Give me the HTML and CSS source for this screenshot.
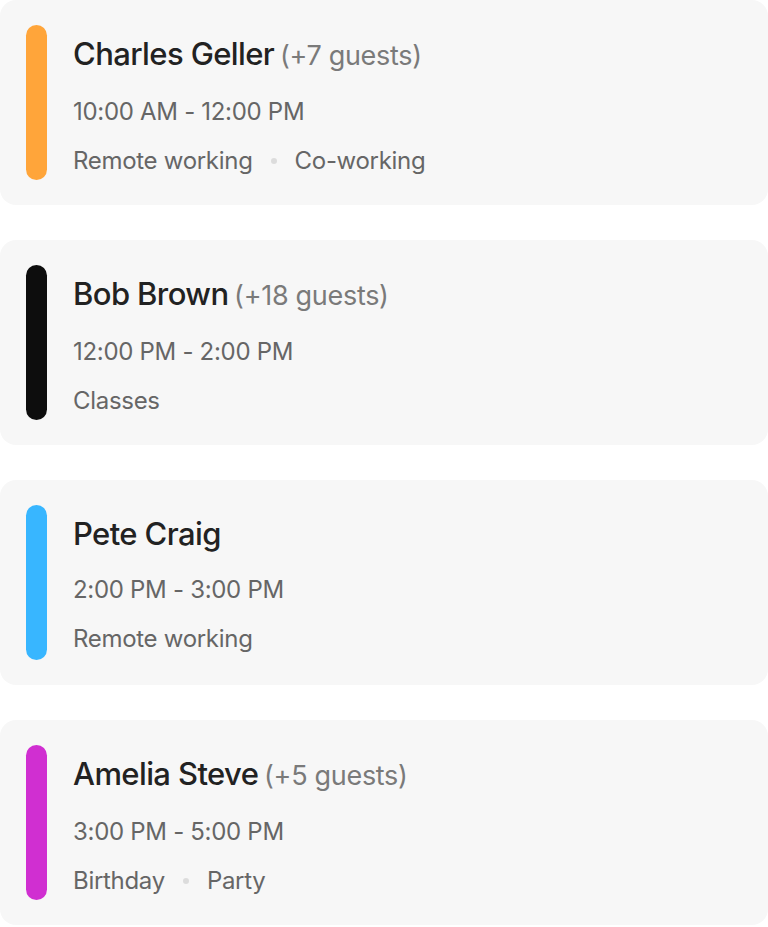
FILE: index.html
```html
<!doctype html>
<html>
<head>
    <meta charset="utf-8">
    <title>Bookings</title>
    <link rel="stylesheet" href="styles.css">
</head>
<body>
    <div class="bookings">
        <div class="booking">
            <div class="bar bar-orange"></div>
            <div class="info">
                <div class="name">Charles Geller <span class="guests">(+7 guests)</span></div>
                <div class="time">10:00 AM - 12:00 PM</div>
                <div class="tags"><span>Remote working</span><span class="dot"></span><span>Co-working</span></div>
            </div>
        </div>

        <div class="booking">
            <div class="bar bar-black"></div>
            <div class="info">
                <div class="name">Bob Brown <span class="guests">(+18 guests)</span></div>
                <div class="time">12:00 PM - 2:00 PM</div>
                <div class="tags"><span>Classes</span></div>
            </div>
        </div>

        <div class="booking">
            <div class="bar bar-blue"></div>
            <div class="info">
                <div class="name">Pete Craig</div>
                <div class="time">2:00 PM - 3:00 PM</div>
                <div class="tags"><span>Remote working</span></div>
            </div>
        </div>

        <div class="booking">
            <div class="bar bar-pink"></div>
            <div class="info">
                <div class="name">Amelia Steve <span class="guests">(+5 guests)</span></div>
                <div class="time">3:00 PM - 5:00 PM</div>
                <div class="tags"><span>Birthday</span><span class="dot"></span><span>Party</span></div>
            </div>
        </div>
    </div>
</body>
</html>
```

FILE: styles.css
```css
body {
    margin: 0;
    background: #ffffff;
    font-family: Inter, "Liberation Sans", sans-serif;
}

.bookings {
    display: flex;
    flex-direction: column;
    gap: 35px;
}

.booking {
    display: flex;
    gap: 26px;
    height: 205px;
    box-sizing: border-box;
    padding: 25px 26px;
    background: #f7f7f7;
    border-radius: 16px;
}

.bar {
    width: 21px;
    flex-shrink: 0;
    border-radius: 11px;
}

.bar-orange {
    background: #ffa53a;
}

.bar-black {
    background: #0d0d0d;
}

.bar-blue {
    background: #38b6ff;
}

.bar-pink {
    background: #d02fd1;
}

.name {
    margin-top: 9px;
    font-size: 31px;
    font-weight: 500;
    line-height: 40px;
    color: #222222;
    letter-spacing: -0.6px;
}

.guests {
    margin-left: -2px;
    font-size: 27px;
    font-weight: 400;
    color: #7a7a7a;
    letter-spacing: -0.3px;
}

.time {
    margin-top: 20px;
    font-size: 24px;
    line-height: 32px;
    color: #666666;
    letter-spacing: -0.3px;
}

.tags {
    display: flex;
    align-items: center;
    gap: 18px;
    margin-top: 17px;
    font-size: 24px;
    line-height: 32px;
    color: #666666;
    letter-spacing: -0.3px;
}

.dot {
    width: 6px;
    height: 6px;
    border-radius: 50%;
    background: #dcdcdc;
}
```
